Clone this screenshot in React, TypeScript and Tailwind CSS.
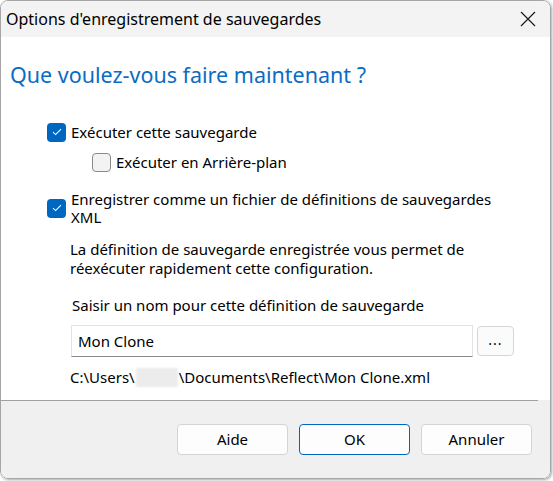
import React from 'react';

const font = { fontFamily: '"Segoe UI", "Noto Sans", sans-serif' };

const Check = ({ checked }: { checked: boolean }) =>
  checked ? (
    <span className="flex h-[19px] w-[19px] shrink-0 items-center justify-center rounded-[4px] bg-[#0067c0]">
      <svg width="10" height="8" viewBox="0 0 10 8" fill="none">
        <path d="M1 4.2 L3.6 6.6 L9 1.2" stroke="white" strokeWidth="1.1" />
      </svg>
    </span>
  ) : (
    <span className="h-[19px] w-[19px] shrink-0 rounded-[4px] border border-[#8a8a8a] bg-[#f3f3f3]" />
  );

const Btn = ({ label, primary }: { label: string; primary?: boolean }) => (
  <button
    className={
      'h-[31px] w-[111px] rounded-[4px] bg-[#fdfdfd] text-[15px] text-black ' +
      (primary ? 'border border-[#0067c0]' : 'border border-[#d4d4d4]')
    }
  >
    {label}
  </button>
);

export default function App() {
  return (
    <div className="h-[481px] w-[553px] bg-white" style={font}>
      <div className="flex h-[479px] w-[551px] flex-col overflow-hidden rounded-[8px] border border-[#a6a6a6] shadow-[1px_1px_3px_rgba(0,0,0,0.35)]">
        {/* barre de titre */}
        <div className="flex h-[36px] shrink-0 items-center justify-between bg-[#f3f3f3] pl-[5px] pr-[14px]">
          <span className="text-[16px] text-black">Options d'enregistrement de sauvegardes</span>
          <svg width="16" height="16" viewBox="0 0 16 16">
            <path d="M1 1 L15 15 M15 1 L1 15" stroke="#1a1a1a" strokeWidth="1.2" />
          </svg>
        </div>

        {/* contenu */}
        <div className="flex-1 bg-white pl-[9px] pt-[23px] text-[15px] text-black">
          <h1 className="text-[21.5px] leading-[30px] text-[#0a6cc4]">Que voulez-vous faire maintenant ?</h1>

          <div className="mt-[32px] pl-[37px]">
            <label className="flex items-center gap-[5px] leading-[20px]">
              <Check checked />
              <span>Exécuter cette sauvegarde</span>
            </label>
            <label className="ml-[45px] mt-[10px] flex items-center gap-[5px] leading-[20px]">
              <Check checked={false} />
              <span>Exécuter en Arrière-plan</span>
            </label>
            <label className="mt-[18px] flex items-center gap-[5px] leading-[18px]">
              <Check checked />
              <span>
                Enregistrer comme un fichier de définitions de sauvegardes
                <br />
                XML
              </span>
            </label>

            <div className="pl-[23px]">
              <p className="mt-[14px] leading-[19px]">
                La définition de sauvegarde enregistrée vous permet de
                <br />
                réexécuter rapidement cette configuration.
              </p>
              <p className="mt-[17px] pl-[2px] leading-[20px]">Saisir un nom pour cette définition de sauvegarde</p>
              <div className="mt-[10px] flex items-center gap-[4px] pl-[1px]">
                <div className="flex h-[32px] w-[402px] items-center border border-[#e3e3e3] border-b-[#8a8a8a] bg-white pl-[6px]">
                  Mon Clone
                </div>
                <button className="flex h-[30px] w-[37px] items-center justify-center rounded-[4px] border border-[#d6d6d6] bg-[#fbfbfb] pb-[4px] text-[14px] tracking-[1px]">
                  ...
                </button>
              </div>
              <div className="mt-[10px] flex items-center leading-[20px]">
                <span>C:\Users\</span>
                <span className="mx-[1px] h-[19px] w-[42px] bg-[#ececec] blur-[1px]" />
                <span>\Documents\Reflect\Mon Clone.xml</span>
              </div>
            </div>
          </div>
        </div>

        {/* pied */}
        <div className="shrink-0 bg-[#f0f0f0]">
          <div className="mr-[12px] h-px bg-[#a0a0a0]" />
          <div className="flex h-[77px] items-center justify-end gap-[11px] pr-[18px]">
            <Btn label="Aide" />
            <Btn label="OK" primary />
            <Btn label="Annuler" />
          </div>
        </div>
      </div>
    </div>
  );
}
